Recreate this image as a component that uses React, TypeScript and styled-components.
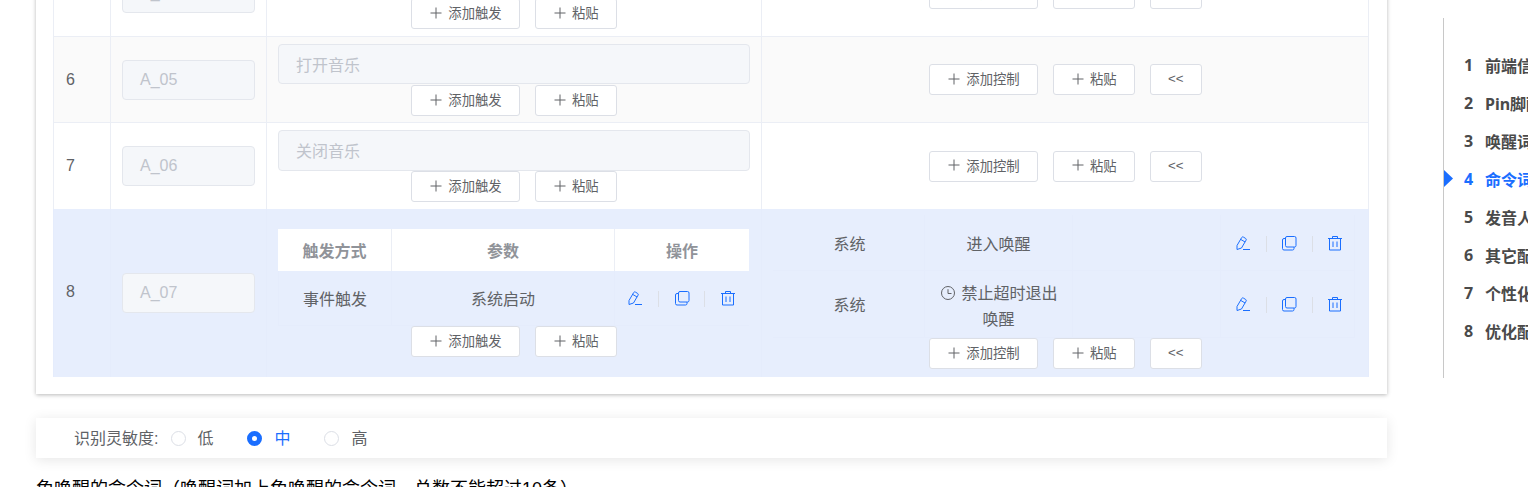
import React from "react";
import styled, { createGlobalStyle } from "styled-components";

const Global = createGlobalStyle`
  html, body { margin: 0; padding: 0; height: 487px; overflow: hidden; background: #fff; }
  body { font-family: "Liberation Sans", "Noto Sans CJK SC", sans-serif; color: #606266; }
  * { box-sizing: border-box; }
`;

const Page = styled.div`
  display: flex;
  align-items: flex-start;
  width: 1528px;
  height: 487px;
  overflow: hidden;
`;
const Main = styled.main`
  width: 1351px;
  margin: -51px 0 0 36px;
  flex: none;
`;
const Card = styled.section`
  background: #fff;
  padding: 0 18px 17px 17px;
  box-shadow: 0 1px 4px rgba(0, 0, 0, 0.28);
`;
const Row = styled.div<{ $h: number; $bg?: string; $clear?: boolean }>`
  display: grid;
  grid-template-columns: 57px 156px 495px 608px;
  height: ${(p) => p.$h}px;
  background: ${(p) => p.$bg || "#fff"};
  border-top: ${(p) => (p.$clear ? "0" : "1px solid #ebeef5")};
`;
const Cell = styled.div<{ $soft?: boolean }>`
  border-left: 1px solid ${(p) => (p.$soft ? "#e5ecfc" : "#ebeef5")};
  padding: 0 11px;
  display: flex;
  flex-direction: column;
  min-width: 0;
`;
const NumCell = styled(Cell)`
  justify-content: center;
  font-size: 16px;
  padding: 0 0 ${(p) => (p.$soft ? "2px" : "0")} 12px;
`;
const NameCell = styled(Cell)`
  justify-content: center;
`;
const TriggerCell = styled(Cell)`
  padding: 7px 11px 0 11px;
`;
const ControlCell = styled(Cell)<{ $top?: boolean }>`
  justify-content: ${(p) => (p.$top ? "flex-start" : "center")};
  border-right: 1px solid ${(p) => (p.$top ? "#e5ecfc" : "#ebeef5")};
  padding: ${(p) => (p.$top ? "6px" : "0")} 10px 0 11px;
`;
const Field = styled.div<{ $h?: number }>`
  height: ${(p) => p.$h || 40}px;
  background: #f5f7fa;
  border: 1px solid #e4e7ed;
  border-radius: 4px;
  display: flex;
  align-items: center;
  padding-left: 17px;
  padding-bottom: ${(p) => (p.$h && p.$h > 40 ? "1px" : "0")};
  font-size: 16px;
  color: #c0c4cc;
  flex: none;
  width: 133px;
`;
const WideField = styled(Field)`
  width: 472px;
`;
const Actions = styled.div<{ $mt?: number }>`
  display: flex;
  justify-content: center;
  gap: 15px;
  flex: none;
  margin-top: ${(p) => p.$mt || 0}px;
`;
const Btn = styled.button`
  height: 31px;
  padding: 0 17.2px 2px;
  background: #fff;
  border: 1px solid #dcdfe6;
  border-radius: 3px;
  color: #606266;
  font: 13.33px "Liberation Sans", "Noto Sans CJK SC", sans-serif;
  display: inline-flex;
  align-items: center;
  justify-content: center;
  gap: 5px;
  margin: 0;
`;
const SubTable = styled.div`
  width: 471px;
  flex: none;
  margin-top: 13px;
`;
const SubHead = styled.div`
  display: grid;
  grid-template-columns: 114px 223px 134px;
  height: 42px;
  background: #fff;
`;
const SubHeadCell = styled.div`
  display: flex;
  align-items: center;
  justify-content: center;
  font-size: 16px;
  font-weight: 700;
  color: #909399;
  border-right: 1px solid #ebeef5;
  &:last-child { border-right: 0; }
`;
const SubBody = styled.div`
  display: grid;
  grid-template-columns: 113px 223px 134px;
  height: 55px;
  border-bottom: 1px solid #e5ecfc;
  border-left: 1px solid #e5ecfc;
`;
const SubCell = styled.div`
  display: flex;
  align-items: center;
  justify-content: center;
  font-size: 16px;
  border-right: 1px solid #e5ecfc;
  padding-bottom: 1px;
`;
const IconGroup = styled.div`
  display: flex;
  align-items: center;
  justify-content: center;
  padding-top: 1px;
`;
const SubIcons = styled.div`
  display: flex;
  align-items: center;
  justify-content: center;
  padding-right: 2px;
`;
const IconSlot = styled.span`
  display: inline-flex;
  width: 46px;
  height: 16px;
  align-items: center;
  justify-content: center;
  border-left: 1px solid #dcdfe6;
  &:first-child { border-left: 0; }
  svg { margin-top: -2px; }
`;
const ControlTable = styled.div`
  width: 582px;
`;
const ControlRow = styled.div<{ $h: number }>`
  display: grid;
  grid-template-columns: 152px 148px 148px 134px;
  height: ${(p) => p.$h}px;
  border-bottom: 1px solid #e5ecfc;
`;
const ControlText = styled.div<{ $pt?: number }>`
  display: flex;
  align-items: center;
  justify-content: center;
  text-align: center;
  font-size: 16px;
  line-height: 26px;
  border-right: 1px solid #e5ecfc;
  padding-top: ${(p) => p.$pt || 0}px;
  &:first-child { padding-left: 2px; }
`;
const ClockIcon = styled.svg`
  width: 14px;
  height: 14px;
  vertical-align: -1px;
  margin: 0 6px 0 2px;
`;
const ControlIcons = styled.div`
  display: flex;
  align-items: center;
  justify-content: center;
  padding: 1px 0 0 2px;
  border-right: 1px solid #e5ecfc;
`;

const Panel = styled.section`
  margin-top: 24px;
  height: 40px;
  width: 1351px;
  display: flex;
  align-items: center;
  padding-left: 38px;
  font-size: 16px;
  box-shadow: 0 2px 12px rgba(0, 0, 0, 0.1);
`;
const PanelLabel = styled.span`
  margin: -2px 13px 0 0;
`;
const Radio = styled.span<{ $on?: boolean; $m: number }>`
  width: 15px;
  height: 15px;
  border-radius: 50%;
  flex: none;
  background: #fff;
  border: ${(p) => (p.$on ? "5px solid #1a6eff" : "1px solid #dcdfe6")};
  margin-right: ${(p) => p.$m}px;
`;
const RadioText = styled.span<{ $on?: boolean; $w: number }>`
  color: ${(p) => (p.$on ? "#1a6eff" : "#606266")};
  width: ${(p) => p.$w}px;
  margin-top: -2px;
`;
const Caption = styled.p`
  margin: 19px 0 0;
  font-size: 18px;
  line-height: 25px;
  color: #000;
  white-space: nowrap;
`;

const Side = styled.aside`
  margin: 18px 0 0 56px;
  width: 85px;
  height: 360px;
  flex: none;
  border-left: 1px solid #c8c8c8;
  padding: 27.5px 0 0 20px;
  position: relative;
  overflow: hidden;
`;
const SideItem = styled.div<{ $on?: boolean }>`
  height: 38.1px;
  display: flex;
  align-items: center;
  font: 700 16px "Noto Sans", "Noto Sans CJK SC", sans-serif;
  color: ${(p) => (p.$on ? "#1a6eff" : "#4a4a4a")};
  white-space: nowrap;
  span { width: 21px; flex: none; }
`;
const Marker = styled.svg`
  position: absolute;
  left: 0;
  top: 152px;
`;

const Plus = () => (
  <svg width="14" height="14" viewBox="0 0 14 14" fill="none" stroke="#606266" strokeWidth="1">
    <path d="M7 1.5v11M1.5 7h11" />
  </svg>
);
const Pencil = () => (
  <svg width="16" height="16" viewBox="0 0 16 16" fill="none" stroke="#1a6eff" strokeWidth="1">
    <path d="M2 14.5V10.5L6.7 2.5Q7.3 1.5 8.4 2.1L10.6 3.4Q11.7 4 11.1 5.1L6.5 13Z" />
    <path d="M5.7 4.4l4.4 2.6" />
    <path d="M8 14.5h7" />
  </svg>
);
const Copy = () => (
  <svg width="16" height="16" viewBox="0 0 16 16" fill="none" stroke="#1a6eff" strokeWidth="1">
    <rect x="4.5" y="1.5" width="10.5" height="10.5" rx="1.5" />
    <path d="M4.5 3.5H3A1.5 1.5 0 0 0 1.5 5v8.5A1.5 1.5 0 0 0 3 15h8.5a1.5 1.5 0 0 0 1.5-1.5V12" />
  </svg>
);
const Trash = () => (
  <svg width="16" height="16" viewBox="0 0 16 16" fill="none" stroke="#1a6eff" strokeWidth="1">
    <path d="M1 3.5h14M5.5 3.5V1.5h5v2M2.5 3.5V15h11V3.5M6 6.5v5.5M10 6.5v5.5" />
  </svg>
);
const Tools = () => (
  <IconGroup>
    <IconSlot><Pencil /></IconSlot>
    <IconSlot><Copy /></IconSlot>
    <IconSlot><Trash /></IconSlot>
  </IconGroup>
);
const TriggerActions = ({ mt }: { mt: number }) => (
  <Actions $mt={mt}>
    <Btn><Plus />添加触发</Btn>
    <Btn><Plus />粘贴</Btn>
  </Actions>
);
const ControlActions = () => (
  <Actions>
    <Btn><Plus />添加控制</Btn>
    <Btn><Plus />粘贴</Btn>
    <Btn>&lt;&lt;</Btn>
  </Actions>
);

const simple = [
  { n: 5, id: "A_04", text: "播放音乐", h: 87, bg: "#fff", f: 40, mt: 1 },
  { n: 6, id: "A_05", text: "打开音乐", h: 86, bg: "#fafafa", f: 40, mt: 1 },
  { n: 7, id: "A_06", text: "关闭音乐", h: 87, bg: "#fff", f: 41, mt: 0 },
];
const sections = ["前端信息配置", "Pin脚配置", "唤醒词配置", "命令词配置", "发音人配置", "其它配置", "个性化配置", "优化配置"];

export default function App() {
  return (
    <Page>
      <Global />
      <Main>
        <Card>
          {simple.map((r) => (
            <Row key={r.n} $h={r.h} $bg={r.bg}>
              <NumCell>{r.n}</NumCell>
              <NameCell><Field>{r.id}</Field></NameCell>
              <TriggerCell>
                <WideField $h={r.f}>{r.text}</WideField>
                <TriggerActions mt={r.mt} />
              </TriggerCell>
              <ControlCell><ControlActions /></ControlCell>
            </Row>
          ))}
          <Row $h={168} $bg="#e7eefd" $clear>
            <NumCell $soft>8</NumCell>
            <NameCell $soft><Field>A_07</Field></NameCell>
            <TriggerCell $soft>
              <SubTable>
                <SubHead>
                  <SubHeadCell>触发方式</SubHeadCell>
                  <SubHeadCell>参数</SubHeadCell>
                  <SubHeadCell>操作</SubHeadCell>
                </SubHead>
                <SubBody>
                  <SubCell>事件触发</SubCell>
                  <SubCell>系统启动</SubCell>
                  <SubIcons><Tools /></SubIcons>
                </SubBody>
              </SubTable>
              <TriggerActions mt={0} />
            </TriggerCell>
            <ControlCell $soft $top>
              <ControlTable>
                <ControlRow $h={56}>
                  <ControlText $pt={5}>系统</ControlText>
                  <ControlText $pt={5}>进入唤醒</ControlText>
                  <ControlText />
                  <ControlIcons><Tools /></ControlIcons>
                </ControlRow>
                <ControlRow $h={67}>
                  <ControlText $pt={3}>系统</ControlText>
                  <ControlText $pt={5}>
                    <div>
                      <ClockIcon viewBox="0 0 14 14" fill="none" stroke="#606266" strokeWidth="1">
                        <circle cx="7" cy="7" r="6.5" />
                        <path d="M7 3.2V7.5H10.5" />
                      </ClockIcon>
                      禁止超时退出
                      <br />
                      唤醒
                    </div>
                  </ControlText>
                  <ControlText />
                  <ControlIcons><Tools /></ControlIcons>
                </ControlRow>
              </ControlTable>
              <ControlActions />
            </ControlCell>
          </Row>
        </Card>
        <Panel>
          <PanelLabel>识别灵敏度:</PanelLabel>
          <Radio $m={11} />
          <RadioText $w={50}>低</RadioText>
          <Radio $on $m={12} />
          <RadioText $on $w={50}>中</RadioText>
          <Radio $m={12} />
          <RadioText $w={20}>高</RadioText>
        </Panel>
        <Caption>免唤醒的命令词（唤醒词加上免唤醒的命令词，总数不能超过10条）</Caption>
      </Main>
      <Side>
        <Marker width="9" height="17" viewBox="0 0 9 17"><path d="M0 0L9 8.5 0 17z" fill="#1a6eff" /></Marker>
        {sections.map((s, i) => (
          <SideItem key={s} $on={i === 3}><span>{i + 1}</span>{s}</SideItem>
        ))}
      </Side>
    </Page>
  );
}
